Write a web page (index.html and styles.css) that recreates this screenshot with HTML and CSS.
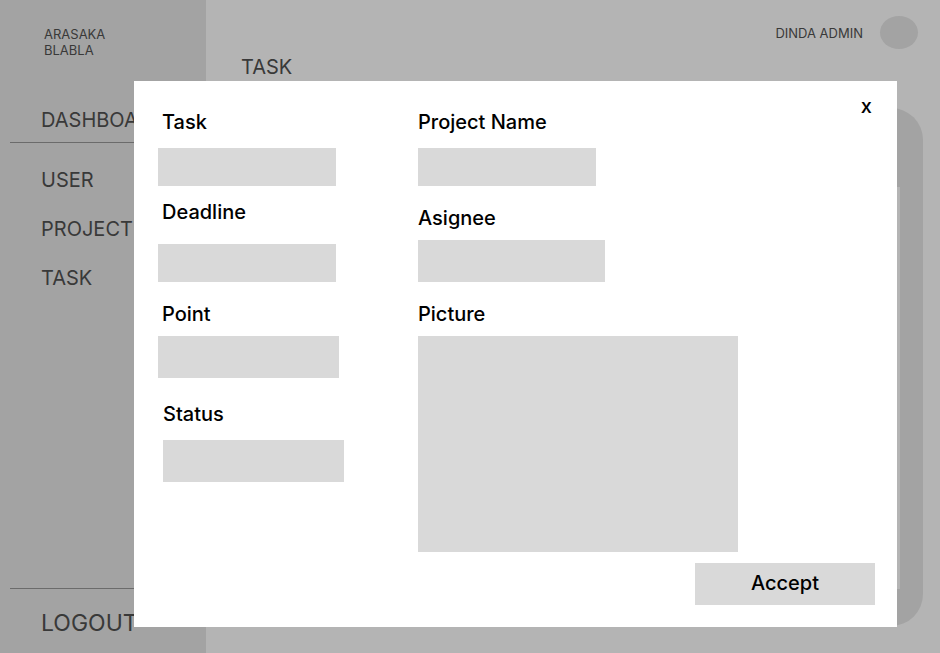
FILE: index.html
```html
<!DOCTYPE html>
<html lang="en">
<head>
  <meta charset="utf-8">
  <meta name="viewport" content="width=device-width, initial-scale=1">
  <title>Task</title>
  <link rel="stylesheet" href="styles.css">
</head>
<body>
  <div class="page">
    <aside class="sidebar">
      <p class="brand">ARASAKA<br>BLABLA</p>
      <nav class="nav">
        <a class="nav-link nav-link--home" href="#">DASHBOARD</a>
        <a class="nav-link" href="#">USER</a>
        <a class="nav-link" href="#">PROJECT</a>
        <a class="nav-link" href="#">TASK</a>
      </nav>
      <div class="sidebar-foot">
        <a class="logout" href="#">LOGOUT</a>
      </div>
    </aside>
    <main class="main">
      <header class="topbar">
        <span class="user">DINDA ADMIN</span>
        <span class="avatar"></span>
      </header>
      <h1 class="title">TASK</h1>
      <section class="panel"><div class="panel-body"></div></section>
    </main>
  </div>

  <div class="overlay">
    <form class="modal" role="dialog" aria-label="Task">
      <button class="close" type="button">x</button>
      <div class="columns">
        <div class="column column--left">
          <div class="field">
            <label for="task">Task</label>
            <input class="box" id="task" type="text">
          </div>
          <div class="field field--near field--loose">
            <label for="deadline">Deadline</label>
            <input class="box" id="deadline" type="text">
          </div>
          <div class="field field--tight">
            <label for="point">Point</label>
            <input class="box box--large" id="point" type="text">
          </div>
          <div class="field field--far field--inset">
            <label for="status">Status</label>
            <input class="box box--large" id="status" type="text">
          </div>
        </div>
        <div class="column">
          <div class="field">
            <label for="project">Project Name</label>
            <input class="box" id="project" type="text">
          </div>
          <div class="field field--tight">
            <label for="assignee">Asignee</label>
            <input class="box box--large box--wide" id="assignee" type="text">
          </div>
          <div class="field field--tight field--picture">
            <label for="picture">Picture</label>
            <div class="picture"><input class="picture-input" id="picture" type="file"></div>
          </div>
        </div>
      </div>
      <button class="accept" type="submit">Accept</button>
    </form>
  </div>
</body>
</html>
```

FILE: styles.css
```css
* {
  box-sizing: border-box;
}

body {
  margin: 0;
  font-family: Inter, "Liberation Sans", sans-serif;
  font-size: 20px;
  line-height: 24px;
  color: #393939;
  background: #b4b4b4;
}

a {
  color: inherit;
  text-decoration: none;
}

button,
input {
  font: inherit;
  color: #000;
  border: 0;
}

.page {
  display: flex;
  min-height: 100vh;
}

/* Sidebar */
.sidebar {
  display: flex;
  flex-direction: column;
  flex: 0 0 206px;
  padding: 26px 0 16px 10px;
  background: #a3a3a3;
}

.brand {
  margin: 0 0 50px 34px;
  font-size: 13px;
  line-height: 16px;
}

.nav {
  display: flex;
  flex-direction: column;
  gap: 25px;
}

.nav-link {
  padding-left: 31px;
}

.nav-link--home {
  padding-bottom: 10px;
  border-bottom: 1px solid #6b6b6b;
}

.sidebar-foot {
  margin-top: auto;
  padding: 20px 0 0 31px;
  border-top: 1px solid #6b6b6b;
}

.logout {
  display: block;
  font-size: 23px;
  line-height: 28px;
}

/* Page behind the dialog */
.main {
  display: flex;
  flex-direction: column;
  flex: 1;
  padding: 16px 17px 27px 35px;
}

.topbar {
  display: flex;
  justify-content: flex-end;
  align-items: center;
  gap: 17px;
  padding-right: 5px;
}

.user {
  font-size: 13px;
  line-height: 16px;
}

.avatar {
  width: 38px;
  height: 33px;
  border-radius: 50%;
  background: #a3a3a3;
}

.title {
  margin: 6px 0 29px;
  font-size: 20px;
  font-weight: 400;
}

.panel {
  display: flex;
  flex: 1;
  padding: 79px 23px 37px;
  border-radius: 32px;
  background: #a3a3a3;
}

.panel-body {
  flex: 1;
  background: #b4b4b4;
}

/* Dialog */
.overlay {
  position: absolute;
  inset: 0;
  display: flex;
  padding: 81px 43px 26px 134px;
}

.modal {
  position: relative;
  display: flex;
  flex-direction: column;
  flex: 1;
  padding: 29px 22px 22px 24px;
  color: #000;
  background: #fff;
}

.close {
  position: absolute;
  top: 13px;
  right: 21px;
  padding: 0 4px;
  font-weight: 500;
  background: none;
}

.columns {
  display: grid;
  grid-template-columns: 260fr 457fr;
  flex: 1;
}

.column {
  display: flex;
  flex-direction: column;
  gap: 20px;
}

.column--left {
  gap: 0;
}

.column--left .field--tight {
  margin-top: 20px;
}

.field {
  display: flex;
  flex-direction: column;
  align-items: flex-start;
  gap: 14px;
}

.field--near {
  margin-top: 14px;
}

.field--far {
  margin-top: 24px;
}

.field--tight {
  gap: 10px;
}

.field--loose {
  gap: 20px;
}

.field label {
  font-weight: 500;
}

.column--left label {
  padding-left: 4px;
}

.field--inset {
  padding-left: 5px;
}

.column--left .field--inset label {
  padding-left: 0;
}

.box {
  width: 178px;
  height: 38px;
  padding: 0 10px;
  border-radius: 0;
  background: #d9d9d9;
}

.box--large {
  width: 181px;
  height: 42px;
}

.box--wide {
  width: 187px;
}

.field--picture {
  flex: 1;
}

.picture {
  flex: 1;
  width: 70%;
  background: #d9d9d9;
}

.picture-input {
  display: block;
  width: 100%;
  height: 100%;
  opacity: 0;
}

.accept {
  align-self: flex-end;
  width: 180px;
  height: 42px;
  margin-top: 11px;
  padding: 0 0 2px;
  font-weight: 500;
  background: #d9d9d9;
}
```
